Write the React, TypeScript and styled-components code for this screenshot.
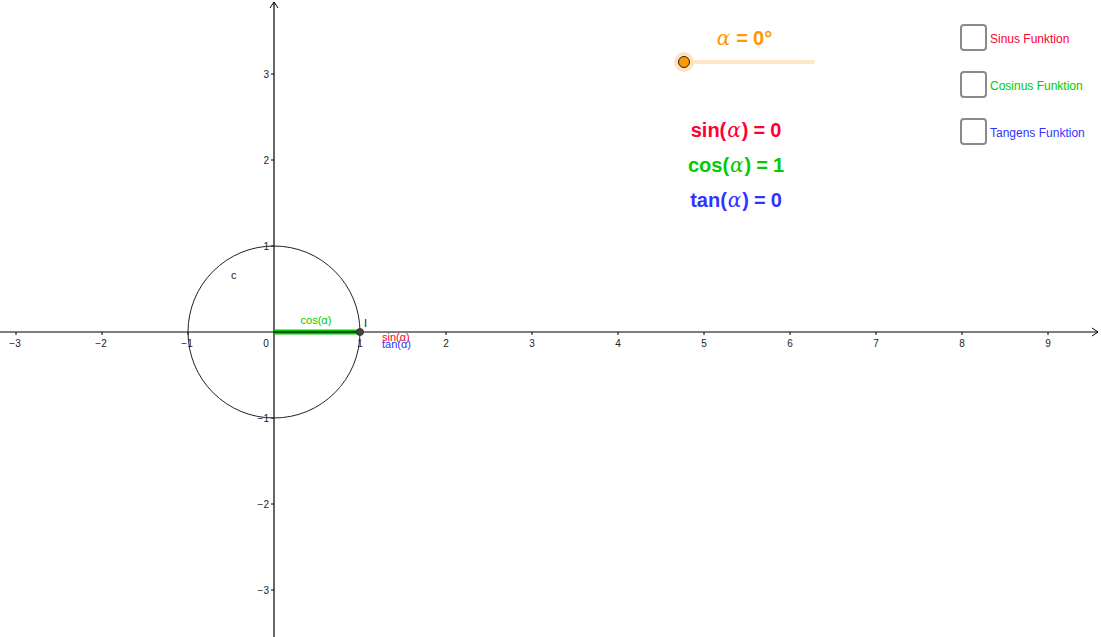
import React, { FC } from 'react';
import styled, { createGlobalStyle } from 'styled-components';

const W = 1101;
const H = 637;
const OX = 274;
const OY = 332;
const UNIT = 86;

const GlobalStyle = createGlobalStyle`
    html, body {
        margin: 0;
        padding: 0;
        background: #ffffff;
        font-family: "Liberation Sans", Arial, sans-serif;
    }
`;

const Canvas = styled.div`
    position: relative;
    width: ${W}px;
    height: ${H}px;
    overflow: hidden;
    background: #ffffff;
`;

const GraphSvg = styled.svg`
    display: block;
    font-family: "Liberation Sans", Arial, sans-serif;
`;

/** Slider */
const SliderBox = styled.div`
    position: absolute;
    left: 672px;
    top: 23px;
    width: 150px;
    display: flex;
    flex-direction: column;
    align-items: center;
`;

const SliderLabel = styled.div`
    margin-left: -6px;
    color: #ff9900;
    font-size: 20px;
    font-weight: bold;
    line-height: 30px;
    white-space: nowrap;
`;

const SliderTrack = styled.div`
    position: relative;
    align-self: flex-start;
    margin-left: 12px;
    margin-top: 7px;
    width: 131px;
    height: 4px;
    border-radius: 2px;
    background: #ffe6c6;
`;

const SliderKnob = styled.div`
    position: absolute;
    left: -6px;
    top: -4px;
    box-sizing: border-box;
    width: 12px;
    height: 12px;
    border-radius: 50%;
    background: #ff9900;
    border: 1px solid #222;
    box-shadow: 0 0 0 4px #ffe3c0;
`;

/** Formulas */
const FormulaList = styled.div`
    position: absolute;
    left: 661px;
    top: 117px;
    width: 150px;
    display: flex;
    flex-direction: column;
    align-items: center;
    gap: 9px;
`;

const Formula = styled.div<{ $color: string }>`
    color: ${p => p.$color};
    font-size: 20px;
    font-weight: bold;
    line-height: 26px;
    white-space: nowrap;
`;

const Alpha = styled.span`
    font-family: "DejaVu Serif", "Liberation Serif", serif;
    font-style: italic;
    font-weight: normal;
    padding: 0 1px;
`;

const Eq = styled.span`
    margin: 0 5px;
`;

/** Checkboxes */
const CheckList = styled.div`
    position: absolute;
    left: 960px;
    top: 24px;
    display: flex;
    flex-direction: column;
    gap: 20px;
`;

const CheckRow = styled.label`
    display: flex;
    align-items: center;
    gap: 3px;
`;

const CheckBox = styled.span`
    display: block;
    box-sizing: border-box;
    width: 27px;
    height: 27px;
    border: 2px solid #8a8a8a;
    border-radius: 4px;
    background: #fff;
`;

const CheckText = styled.span<{ $color: string }>`
    color: ${p => p.$color};
    font-size: 12px;
    padding-top: 2px;
`;

const RED = '#ff0033';
const GREEN = '#00cc00';
const BLUE = '#3333ff';

const xTicks = [-3, -2, -1, 1, 2, 3, 4, 5, 6, 7, 8, 9];
const yTicks = [-3, -2, -1, 1, 2, 3];
const fmt = (n: number) => (n < 0 ? `\u2212${-n}` : `${n}`);

const Graph: FC = () => (
    <GraphSvg width={W} height={H} viewBox={`0 0 ${W} ${H}`}>
        {/* axes */}
        <line x1={0} y1={OY} x2={W - 3} y2={OY} stroke="#000" strokeWidth={1.2} />
        <polyline points={`${W - 9},${OY - 4} ${W - 3},${OY} ${W - 9},${OY + 4}`} fill="none" stroke="#000" strokeWidth={1} />
        <line x1={OX} y1={2} x2={OX} y2={H} stroke="#000" strokeWidth={1.2} />
        <polyline points={`${OX - 4},${8} ${OX},${2} ${OX + 4},${8}`} fill="none" stroke="#000" strokeWidth={1} />

        {xTicks.map(t => {
            const x = OX + t * UNIT;
            return (
                <g key={`x${t}`}>
                    <line x1={x} y1={OY} x2={x} y2={OY + 3} stroke="#000" />
                    <text x={t < 0 ? x - 1 : x} y={OY + 15} fontSize={10} fill="#222" textAnchor="middle">{fmt(t)}</text>
                </g>
            );
        })}
        <text x={OX - 8} y={OY + 15} fontSize={10} fill="#222" textAnchor="middle">0</text>
        {yTicks.map(t => {
            const y = OY - t * UNIT;
            return (
                <g key={`y${t}`}>
                    <line x1={OX - 3} y1={y} x2={OX} y2={y} stroke="#000" />
                    <text x={OX - 5} y={y + 4} fontSize={10} fill="#222" textAnchor="end">{fmt(t)}</text>
                </g>
            );
        })}

        {/* unit circle */}
        <circle cx={OX} cy={OY} r={UNIT} fill="none" stroke="#222" strokeWidth={1} />
        <text x={231} y={279} fontSize={11} fill="#222">c</text>

        {/* cos segment */}
        <line x1={OX} y1={OY} x2={OX + UNIT} y2={OY} stroke={GREEN} strokeWidth={5} />
        <line x1={OX} y1={OY} x2={OX + UNIT} y2={OY} stroke="#005500" strokeWidth={2} />
        <text x={316} y={324} fontSize={11} fill={GREEN} textAnchor="middle">cos(α)</text>

        {/* point */}
        <circle cx={OX + UNIT} cy={OY} r={3.5} fill="#444" stroke="#222" strokeWidth={0.8} />
        <text x={364} y={327} fontSize={11} fill="#222">I</text>
        <text x={382} y={341} fontSize={11} fill={RED}>sin(α)</text>
        <text x={382} y={348} fontSize={11} fill={BLUE}>tan(α)</text>
    </GraphSvg>
);

const App: FC = () => (
    <>
        <GlobalStyle />
        <Canvas>
            <Graph />

            <SliderBox>
                <SliderLabel>
                    <Alpha>α</Alpha><Eq>=</Eq>0°
                </SliderLabel>
                <SliderTrack>
                    <SliderKnob />
                </SliderTrack>
            </SliderBox>

            <FormulaList>
                <Formula $color={RED}>sin(<Alpha>α</Alpha>)<Eq>=</Eq>0</Formula>
                <Formula $color={GREEN}>cos(<Alpha>α</Alpha>)<Eq>=</Eq>1</Formula>
                <Formula $color={BLUE}>tan(<Alpha>α</Alpha>)<Eq>=</Eq>0</Formula>
            </FormulaList>

            <CheckList>
                <CheckRow>
                    <CheckBox />
                    <CheckText $color={RED}>Sinus Funktion</CheckText>
                </CheckRow>
                <CheckRow>
                    <CheckBox />
                    <CheckText $color={GREEN}>Cosinus Funktion</CheckText>
                </CheckRow>
                <CheckRow>
                    <CheckBox />
                    <CheckText $color={BLUE}>Tangens Funktion</CheckText>
                </CheckRow>
            </CheckList>
        </Canvas>
    </>
);

export default App;
